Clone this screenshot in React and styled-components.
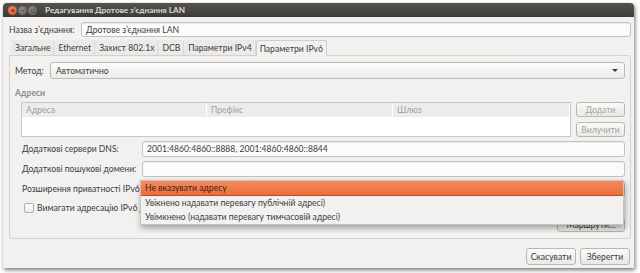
import React from 'react'
import styled, { createGlobalStyle } from 'styled-components'

const Global = createGlobalStyle`
  html, body { margin: 0; padding: 0; background: #ffffff; }
  body { font-family: Lato, 'Liberation Sans', sans-serif; font-size: 8.6px; color: #3c3c3c; }
  * { box-sizing: border-box; }
`

const Page = styled.div`
  width: 640px;
  height: 273px;
  padding: 3px 0 0 3px;
`

const Window = styled.div`
  width: 631px;
  height: 265px;
  background: #f2f1f0;
  border-radius: 4px 4px 0 0;
  box-shadow: 1px 2px 4px rgba(0, 0, 0, 0.55);
  display: flex;
  flex-direction: column;
`

const TitleBar = styled.div`
  height: 14px;
  background: linear-gradient(#55534d, #3c3b37);
  border-radius: 4px 4px 0 0;
  display: flex;
  align-items: center;
  padding-left: 5px;
`

const Dot = styled.span`
  width: 9px;
  height: 9px;
  border-radius: 50%;
  margin-right: 1px;
  background: ${({ close }) => close ? 'radial-gradient(circle at 40% 35%, #f58a64, #d94a22)' : 'radial-gradient(circle at 40% 35%, #8e8c85, #5f5d57)'};
  display: flex;
  align-items: center;
  justify-content: center;
  font-size: 7px;
  line-height: 1;
  color: ${({ close }) => close ? '#4a2010' : '#3b3a36'};
  font-weight: bold;
`

const Title = styled.div`
  margin-left: 7px;
  color: #dfdbd2;
  font-weight: bold;
  font-size: 8.2px;
`

const Body = styled.div`
  flex: 1;
  display: flex;
  flex-direction: column;
  padding: 5px 3px 3px 3px;
`

const NameRow = styled.div`
  display: flex;
  align-items: center;
  height: 15px;
  padding-left: 3px;
`

const NameLabel = styled.span`
  width: 72px;
  white-space: nowrap;
`

const Entry = styled.div`
  flex: 1;
  height: ${({ h }) => h || 15}px;
  background: #fbfbfb;
  border: 1px solid #c4c2bd;
  border-radius: 3px;
  box-shadow: inset 0 1px 1px rgba(0, 0, 0, 0.06);
  display: flex;
  align-items: center;
  padding-left: 4px;
  color: #3c3c3c;
  white-space: nowrap;
`

const Tabs = styled.div`
  display: flex;
  margin: 3px 0 0 5px;
  height: 15px;
  align-items: flex-end;
`

const Tab = styled.div`
  height: ${({ active }) => active ? 16 : 15}px;
  padding: 0 3px;
  display: flex;
  align-items: center;
  white-space: nowrap;
  background: ${({ active }) => active ? '#f2f1f0' : '#ebeae8'};
  border: 1px solid ${({ active }) => active ? '#cfcdc8' : 'transparent'};
  border-bottom: none;
  border-right: 1px solid ${({ active }) => active ? '#cfcdc8' : '#dcdad6'};
  border-radius: ${({ active }) => active ? '3px 3px 0 0' : '0'};
  color: #3c3c3c;
  margin-bottom: ${({ active }) => active ? -1 : 0}px;
  position: relative;
  z-index: ${({ active }) => active ? 1 : 0};
`

const NotePage = styled.div`
  position: relative;
  height: 184px;
  margin-left: 3px;
  border: 1px solid #d4d2cd;
  border-radius: 0 3px 3px 3px;
  background: #f2f1f0;
  padding: 6px 5px 0 5px;
  display: flex;
  flex-direction: column;
`

const MethodRow = styled.div`
  display: flex;
  align-items: center;
  height: 17px;
`

const MethodLabel = styled.span`
  width: 35px;
`

const Combo = styled.div`
  flex: 1;
  height: ${({ h }) => h || 17}px;
  background: linear-gradient(#fcfcfc, #ebeae8);
  border: 1px solid #bdbbb5;
  border-radius: 3px;
  display: flex;
  align-items: center;
  justify-content: space-between;
  padding: 0 6px 0 5px;
`

const Arrow = styled.span`
  width: 0;
  height: 0;
  border-left: 3px solid transparent;
  border-right: 3px solid transparent;
  border-top: 3px solid #3c3c3c;
`

const SectionTitle = styled.div`
  margin-top: 9px;
  height: 12px;
  font-weight: bold;
  color: #8f8d88;
`

const AddrBlock = styled.div`
  display: flex;
  gap: 5px;
  margin-top: 2px;
  padding-left: 6px;
`

const Table = styled.div`
  flex: 1;
  height: 35px;
  background: #ffffff;
  border: 1px solid #c9c7c2;
`

const TableHead = styled.div`
  display: grid;
  grid-template-columns: 185px 186px 1fr;
  height: 14px;
  background: #ececec;
`

const HeadCell = styled.div`
  display: flex;
  align-items: center;
  padding-left: 4px;
  color: #a09e9a;
  border-right: 1px solid #ffffff;
`

const ButtonCol = styled.div`
  width: 49px;
  display: flex;
  flex-direction: column;
  gap: 5px;
`

const Button = styled.div`
  height: ${({ h }) => h || 15}px;
  width: ${({ w }) => w ? `${w}px` : 'auto'};
  border: 1px solid #bab7b1;
  border-radius: 3px;
  background: linear-gradient(#fafaf9, #e9e8e6);
  display: flex;
  align-items: center;
  justify-content: center;
  color: ${({ disabled }) => disabled ? '#a6a4a0' : '#3c3c3c'};
  white-space: nowrap;
`

const Form = styled.div`
  display: grid;
  grid-template-columns: 120px 1fr;
  row-gap: 4px;
  margin-top: 4px;
  padding-left: 7px;
  align-items: center;
`

const Label = styled.span`
  white-space: nowrap;
`

const CheckRow = styled.div`
  display: flex;
  align-items: center;
  gap: 3px;
  height: 12px;
  margin-top: 5px;
  padding-left: 9px;
`

const Check = styled.span`
  width: 10px;
  height: 10px;
  border: 1px solid #b3b0aa;
  border-radius: 2px;
  background: linear-gradient(#ffffff, #ecebe9);
`

const CheckText = styled.span`
  max-width: 106px;
  overflow: hidden;
  white-space: nowrap;
`

const RoutesRow = styled.div`
  display: flex;
  justify-content: flex-end;
  margin-top: 4px;
`

const Menu = styled.div`
  position: absolute;
  left: 130px;
  top: 124px;
  width: 484px;
  background: #f2f1f0;
  border: 1px solid #c6c4bf;
  box-shadow: 1px 3px 6px rgba(0, 0, 0, 0.35);
  z-index: 5;
`

const MenuItem = styled.div`
  height: ${({ selected }) => selected ? 15 : 14}px;
  display: flex;
  align-items: center;
  padding-left: 4px;
  color: ${({ selected }) => selected ? '#3a2418' : '#3c3c3c'};
  background: ${({ selected }) => selected ? 'linear-gradient(#f38b5e, #ec6d3c)' : 'transparent'};
  border-bottom: ${({ selected }) => selected ? '1px solid #c94a1c' : 'none'};
  white-space: nowrap;
`

const Footer = styled.div`
  display: flex;
  justify-content: flex-end;
  gap: 4px;
  margin-top: 9px;
  padding-right: 1px;
`

export default function App() {
  const tabs = ['Загальне', 'Ethernet', 'Захист 802.1x', 'DCB', 'Параметри IPv4', 'Параметри IPv6']

  return (
    <Page>
      <Global />
      <Window>
        <TitleBar>
          <Dot close>×</Dot>
          <Dot>–</Dot>
          <Dot>□</Dot>
          <Title>Редагування Дротове з’єднання LAN</Title>
        </TitleBar>
        <Body>
          <NameRow>
            <NameLabel>Назва з’єднання:</NameLabel>
            <Entry>Дротове з’єднання LAN</Entry>
          </NameRow>
          <Tabs>
            {tabs.map((t, i) => (
              <Tab key={t} active={i === tabs.length - 1}>{t}</Tab>
            ))}
          </Tabs>
          <NotePage>
            <MethodRow>
              <MethodLabel>Метод:</MethodLabel>
              <Combo>
                <span>Автоматично</span>
                <Arrow />
              </Combo>
            </MethodRow>
            <SectionTitle>Адреси</SectionTitle>
            <AddrBlock>
              <Table>
                <TableHead>
                  <HeadCell>Адреса</HeadCell>
                  <HeadCell>Префікс</HeadCell>
                  <HeadCell>Шлюз</HeadCell>
                </TableHead>
              </Table>
              <ButtonCol>
                <Button disabled>Додати</Button>
                <Button disabled>Вилучити</Button>
              </ButtonCol>
            </AddrBlock>
            <Form>
              <Label>Додаткові сервери DNS:</Label>
              <Entry h={16}>2001:4860:4860::8888, 2001:4860:4860::8844</Entry>
              <Label>Додаткові пошукові домени:</Label>
              <Entry h={16} />
              <Label>Розширення приватності IPv6</Label>
              <Combo h={16}>
                <span />
                <Arrow />
              </Combo>
            </Form>
            <CheckRow>
              <Check />
              <CheckText>Вимагати адресацію IPv6 для роботи цього з’єднання</CheckText>
            </CheckRow>
            <RoutesRow>
              <Button w={68} h={14}>Маршрути…</Button>
            </RoutesRow>
            <Menu>
              <MenuItem selected>Не вказувати адресу</MenuItem>
              <MenuItem>Увікнено надавати перевагу публічній адресі)</MenuItem>
              <MenuItem>Увімкнено (надавати перевагу тимчасовій адресі)</MenuItem>
            </Menu>
          </NotePage>
          <Footer>
            <Button w={50} h={17}>Скасувати</Button>
            <Button w={50} h={17}>Зберегти</Button>
          </Footer>
        </Body>
      </Window>
    </Page>
  )
}
